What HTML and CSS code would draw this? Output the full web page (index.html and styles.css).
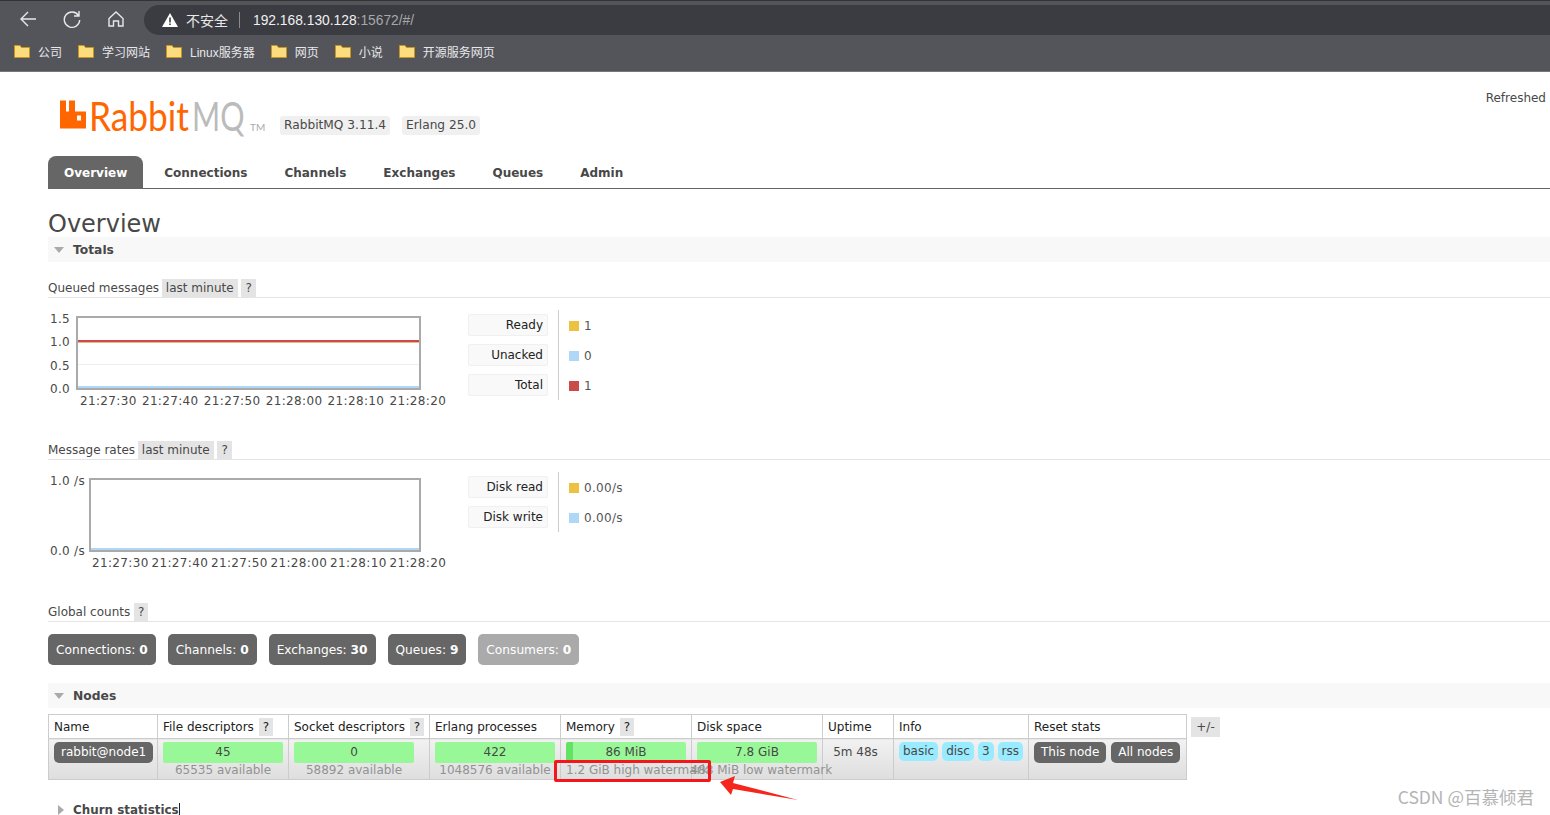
FILE: index.html
```html
<!DOCTYPE html>
<html lang="zh">
<head>
  <meta charset="UTF-8" />
  <title>RabbitMQ Management</title>
  <link rel="stylesheet" href="styles.css">
</head>
<body>

  <div class="chrome">
    <div class="toolbar">
      <svg class="tool-icon" viewBox="0 0 20 20"><path d="M18 10H3M10 3l-7 7 7 7" /></svg>
      <svg class="tool-icon" viewBox="0 0 20 20"><path d="M16.5 6.5A7.7 7.7 0 1 0 17.7 11M17 2v5h-5" /></svg>
      <svg class="tool-icon" viewBox="0 0 20 20"><path d="M3 9.5L10 3l7 6.500V17h-4.500v-5h-5v5H3z" /></svg>
      <div class="address">
        <svg class="warn" viewBox="0 0 16 16"><path d="M8 1l8 14H0z" fill="#fff" /><path d="M7.200 5.500h1.600v5H7.200zM7.200 11.500h1.600v1.600H7.200z" fill="#3b3c41" /></svg>
        <span class="insecure">不安全</span>
        <span class="addr-sep"></span>
        <span class="url">192.168.130.128<span class="url-dim">:15672/#/</span></span>
      </div>
    </div>
    <div class="bookmarks">
      <span class="bookmark"><svg class="folder" viewBox="0 0 16 14"><path d="M.5 1.500h5.500l1.500 2h8v10H.5z" /></svg>公司</span>
      <span class="bookmark"><svg class="folder" viewBox="0 0 16 14"><path d="M.5 1.500h5.500l1.500 2h8v10H.5z" /></svg>学习网站</span>
      <span class="bookmark"><svg class="folder" viewBox="0 0 16 14"><path d="M.5 1.500h5.500l1.500 2h8v10H.5z" /></svg>Linux服务器</span>
      <span class="bookmark"><svg class="folder" viewBox="0 0 16 14"><path d="M.5 1.500h5.500l1.500 2h8v10H.5z" /></svg>网页</span>
      <span class="bookmark"><svg class="folder" viewBox="0 0 16 14"><path d="M.5 1.500h5.500l1.500 2h8v10H.5z" /></svg>小说</span>
      <span class="bookmark"><svg class="folder" viewBox="0 0 16 14"><path d="M.5 1.500h5.500l1.500 2h8v10H.5z" /></svg>开源服务网页</span>
    </div>
  </div>

  <div class="page">
    <div class="header">
      <div class="logo">
        <svg class="logo-mark" viewBox="0 0 26 28"><path fill-rule="evenodd" d="M0 0h6v11h3V0h6v11h11v17H0zM17 15v5h4v-5z" /></svg>
        <span class="logo-rabbit">Rabbit</span><span class="logo-mq">MQ</span><span class="logo-tm">TM</span>
      </div>
      <span class="version">RabbitMQ 3.11.4</span>
      <span class="version">Erlang 25.0</span>
      <span class="refreshed">Refreshed</span>
    </div>

    <div class="tabs">
      <a class="tab active">Overview</a>
      <a class="tab">Connections</a>
      <a class="tab">Channels</a>
      <a class="tab">Exchanges</a>
      <a class="tab">Queues</a>
      <a class="tab">Admin</a>
    </div>

    <h1>Overview</h1>

    <div class="section-bar"><span class="arrow-down"></span>Totals</div>

    <div class="sub-head queued-head">Queued messages <span class="tag">last minute</span> <span class="tag help">?</span></div>
    <div class="chart-row">
      <div class="chart">
        <div class="plot-row">
          <div class="y-axis short"><span>1.5</span><span>1.0</span><span>0.5</span><span>0.0</span></div>
          <svg class="plot" width="345" height="74" viewBox="0 0 345 74">
            <rect x="1" y="1" width="343" height="72" fill="#fff" stroke="#aaa" stroke-width="2" />
            <path d="M2 48.500h341" stroke="#eee" />
            <path d="M2 26h341" stroke="#e8b98a" stroke-width="2" />
            <path d="M2 25h341" stroke="#cb4b4b" stroke-width="2" />
            <path d="M2 71h341" stroke="#afd8f8" stroke-width="2" />
          </svg>
        </div>
        <div class="x-axis wide"><span>21:27:30</span><span>21:27:40</span><span>21:27:50</span><span>21:28:00</span><span>21:28:10</span><span>21:28:20</span></div>
      </div>
      <div class="legend">
        <div class="legend-labels">
          <span class="legend-label">Ready</span>
          <span class="legend-label">Unacked</span>
          <span class="legend-label">Total</span>
        </div>
        <div class="legend-values">
          <span class="legend-value"><i class="swatch yellow"></i>1</span>
          <span class="legend-value"><i class="swatch blue"></i>0</span>
          <span class="legend-value"><i class="swatch red"></i>1</span>
        </div>
      </div>
    </div>

    <div class="sub-head rates-head">Message rates <span class="tag">last minute</span> <span class="tag help">?</span></div>
    <div class="chart-row">
      <div class="chart">
        <div class="plot-row">
          <div class="y-axis long"><span>1.0 /s</span><span>0.0 /s</span></div>
          <svg class="plot" width="332" height="74" viewBox="0 0 332 74">
            <rect x="1" y="1" width="330" height="72" fill="#fff" stroke="#aaa" stroke-width="2" />
            <path d="M2 71h328" stroke="#afd8f8" stroke-width="2" />
          </svg>
        </div>
        <div class="x-axis narrow"><span>21:27:30</span><span>21:27:40</span><span>21:27:50</span><span>21:28:00</span><span>21:28:10</span><span>21:28:20</span></div>
      </div>
      <div class="legend">
        <div class="legend-labels">
          <span class="legend-label">Disk read</span>
          <span class="legend-label">Disk write</span>
        </div>
        <div class="legend-values">
          <span class="legend-value"><i class="swatch yellow"></i>0.00/s</span>
          <span class="legend-value"><i class="swatch blue"></i>0.00/s</span>
        </div>
      </div>
    </div>

    <div class="sub-head counts-head">Global counts <span class="tag help">?</span></div>
    <div class="counts">
      <span class="count">Connections: <b>0</b></span>
      <span class="count">Channels: <b>0</b></span>
      <span class="count">Exchanges: <b>30</b></span>
      <span class="count">Queues: <b>9</b></span>
      <span class="count muted">Consumers: <b>0</b></span>
    </div>

    <div class="section-bar nodes-bar"><span class="arrow-down"></span>Nodes</div>

    <div class="nodes-wrap">
      <table class="nodes">
        <colgroup>
          <col class="c-name"><col class="c-stat"><col class="c-sock"><col class="c-stat"><col class="c-stat"><col class="c-stat"><col class="c-up"><col class="c-info"><col class="c-reset">
        </colgroup>
        <thead>
          <tr>
            <th>Name</th>
            <th>File descriptors <span class="tag help">?</span></th>
            <th>Socket descriptors <span class="tag help">?</span></th>
            <th>Erlang processes</th>
            <th>Memory <span class="tag help">?</span></th>
            <th>Disk space</th>
            <th>Uptime</th>
            <th>Info</th>
            <th>Reset stats</th>
          </tr>
        </thead>
        <tbody>
          <tr>
            <td><span class="pill-dark">rabbit@node1</span></td>
            <td><div class="meter">45</div><div class="sub">65535 available</div></td>
            <td><div class="meter">0</div><div class="sub">58892 available</div></td>
            <td><div class="meter">422</div><div class="sub">1048576 available</div></td>
            <td><div class="meter used">86 MiB</div><div class="sub watermark"><span>1.2 GiB high watermark</span><span class="low">488 MiB low watermark</span></div></td>
            <td><div class="meter">7.8 GiB</div></td>
            <td class="uptime">5m 48s</td>
            <td><div class="pills"><span class="pill">basic</span><span class="pill">disc</span><span class="pill">3</span><span class="pill">rss</span></div></td>
            <td><div class="pills"><span class="pill-dark">This node</span><span class="pill-dark">All nodes</span></div></td>
          </tr>
        </tbody>
      </table>
      <span class="tag plus-minus">+/-</span>
    </div>

    <div class="section-bar churn-bar"><span class="arrow-right"></span>Churn statistics<span class="caret"></span></div>
  </div>

  <!-- annotations on top of the screenshot -->
  <div class="red-box"></div>
  <svg class="red-arrow" width="80" height="26" viewBox="0 0 80 26"><path d="M1 7L16 1l-2 7 65 17-65-11-2 6z" fill="#f5261b" /></svg>
  <div class="csdn">CSDN @百慕倾君</div>

</body>
</html>
```

FILE: styles.css
```css
html, body {
  margin: 0;
  height: 815px;
  overflow: hidden;
}

body {
  position: relative;
  font-family: "DejaVu Sans", Verdana, sans-serif;
  font-size: 12px;
  color: #484848;
  background: #fff;
}

/* browser bar */
.chrome {
  height: 72px;
  background: #54555b;
  border-bottom: 1px solid #77787c;
  border-top: 1px solid #333;
  box-sizing: border-box;
  font-family: "Liberation Sans", "Noto Sans CJK SC", sans-serif;
  color: #fff;
}

.toolbar {
  height: 36px;
  display: flex;
  align-items: center;
  padding-left: 18px;
}

.tool-icon {
  width: 20px;
  height: 20px;
  margin-right: 24px;
  fill: none;
  stroke: #e8e8ea;
  stroke-width: 1.4;
}

.address {
  flex: 1;
  height: 30px;
  margin: 2px 0 0 -6px;
  display: flex;
  align-items: center;
  background: #3b3c41;
  border-radius: 15px 0 0 15px;
  padding-left: 18px;
  font-size: 14px;
}

.warn {
  width: 16px;
  height: 16px;
  margin-right: 8px;
}

.insecure {
  color: #e8e8ea;
}

.addr-sep {
  width: 1px;
  height: 16px;
  background: #8a8b90;
  margin: 0 13px 0 11px;
}

.url {
  font-size: 13.800px;
  color: #f0f0f2;
}

.url-dim {
  color: #a6a7ab;
}

.bookmarks {
  height: 28px;
  display: flex;
  align-items: center;
  padding-left: 14px;
  gap: 16px;
  font-size: 12px;
  color: #e8e8ea;
}

.bookmark {
  display: flex;
  align-items: center;
}

.folder {
  width: 16px;
  height: 14px;
  margin-right: 8px;
  fill: #fbdc7f;
  stroke: #c8961e;
}

/* page */
.page {
  padding-left: 48px;
}

.header {
  height: 84px;
  display: flex;
  align-items: flex-start;
}

.logo {
  display: flex;
  align-items: baseline;
  margin: 24px 0 0 12px;
  width: 220px;
  height: 40px;
  font-family: Lato, "Open Sans", sans-serif;
  font-weight: 400;
  font-size: 41px;
  line-height: 40px;
}

.logo-mark {
  width: 26px;
  height: 29px;
  fill: #ff6600;
  align-self: flex-start;
  margin: 4px 3px 0 0;
}

.logo-rabbit {
  display: inline-block;
  width: 103px;
  color: #ff6600;
  transform: scaleX(.86);
  transform-origin: left;
}

.logo-mq {
  display: inline-block;
  width: 53px;
  color: #bbb;
  transform: scaleX(.74);
  transform-origin: left;
}

.logo-tm {
  color: #aaa;
  font-size: 10px;
  margin-left: 5px;
}

.version {
  margin: 44px 12px 0 0;
  padding: 0 4px;
  height: 19px;
  line-height: 19px;
  background: #f0f0f0;
  border-radius: 3px;
  font-size: 12.200px;
}

.refreshed {
  margin-left: auto;
  margin-top: 19px;
  padding-right: 4px;
}

.tabs {
  display: flex;
  height: 32px;
  border-bottom: 1px solid #666;
}

.tab {
  padding: 0 16px;
  margin-right: 5px;
  line-height: 34px;
  font-weight: bold;
  font-size: 12px;
  color: #484848;
  border-radius: 8px 8px 0 0;
}

.tab.active {
  background: #666;
  color: #fff;
  margin-right: 5px;
}

h1 {
  margin: 20px 0 0;
  height: 28px;
  line-height: 30px;
  font-size: 24px;
  font-weight: normal;
  color: #484848;
}

.section-bar {
  height: 25px;
  box-sizing: border-box;
  padding-top: 1px;
  background: #f8f8f8;
  font-size: 12.300px;
  font-weight: bold;
  display: flex;
  align-items: center;
}

.arrow-down {
  width: 0;
  height: 0;
  margin: 0 9px 0 6px;
  border-left: 5.500px solid transparent;
  border-right: 5.500px solid transparent;
  border-top: 6px solid #aaa;
}

.arrow-right {
  width: 0;
  height: 0;
  margin: 0 9px 0 10px;
  border-top: 5.500px solid transparent;
  border-bottom: 5.500px solid transparent;
  border-left: 6px solid #aaa;
}

.sub-head {
  height: 19px;
  line-height: 20px;
  border-bottom: 1px solid #e4e4e4;
}

.queued-head {
  margin-top: 16px;
}

.tag {
  display: inline-block;
  background: #e4e4e4;
  padding: 0 4px;
  margin-left: -1px;
  line-height: 19px;
  height: 19px;
}

.help {
  margin-left: 0;
}

.chart-row {
  display: flex;
  height: 142px;
}

.chart {
  width: 400px;
  margin-left: 2px;
  padding-top: 14px;
  margin-right: 18px;
  flex: none;
}

.plot-row {
  display: flex;
  height: 84px;
}

.plot {
  display: block;
  margin-top: 4px;
}

.y-axis {
  display: flex;
  flex-direction: column;
  justify-content: space-between;
  line-height: 14px;
  letter-spacing: .3px;
  white-space: nowrap;
}

.y-axis.short {
  width: 26px;
}

.y-axis.long {
  width: 39px;
}

.x-axis {
  display: flex;
  line-height: 14px;
  white-space: nowrap;
  margin-top: -2px;
  letter-spacing: .35px;
}

.x-axis.wide {
  margin-left: 30px;
  gap: 5.200px;
}

.x-axis.narrow {
  margin-left: 42px;
  gap: 2.800px;
}

.legend {
  display: flex;
  padding-top: 12px;
  align-items: flex-start;
}

.legend-labels {
  width: 80px;
  margin-right: 10px;
  padding-top: 4px;
  display: flex;
  flex-direction: column;
  gap: 8px;
}

.legend-label {
  height: 20px;
  line-height: 20px;
  border: 1px solid #f0f0f0;
  border-radius: 2px;
  background: #f9f9f9;
  text-align: right;
  padding-right: 4px;
  color: #222;
}

.legend-values {
  border-left: 1px solid #ccc;
  padding: 5px 0 3px 10px;
  display: flex;
  flex-direction: column;
  gap: 8px;
}

.legend-value {
  height: 22px;
  line-height: 22px;
  display: flex;
  align-items: center;
  color: #555;
  letter-spacing: .3px;
}

.swatch {
  width: 10px;
  height: 10px;
  margin-right: 5px;
}

.yellow { background: #edc240; }
.blue { background: #afd8f8; }
.red { background: #cb4b4b; }

.counts {
  display: flex;
  gap: 12px;
  margin-top: 12px;
}

.count {
  height: 31px;
  line-height: 32px;
  padding: 0 8px;
  background: #666;
  color: #fff;
  border-radius: 5px;
  font-size: 12.200px;
}

.count.muted {
  background: #aaa;
}

.nodes-bar {
  margin-top: 18px;
}

.nodes-wrap {
  display: flex;
  align-items: flex-start;
  margin-top: 6px;
}

.nodes {
  table-layout: fixed;
  width: 1138px;
  border-collapse: collapse;
  border: 1px solid #ccc;
}

.c-name { width: 109px; }
.c-stat { width: 131px; }
.c-sock { width: 141px; }
.c-up { width: 71px; }
.c-info { width: 135px; }
.c-reset { width: 158px; }

.nodes th {
  height: 23px;
  padding: 0 5px;
  font-weight: normal;
  text-align: left;
  white-space: nowrap;
  border: 1px solid #ccc;
  color: #222;
  background: #fff;
}

.nodes .help {
  height: 18px;
  line-height: 18px;
  margin-left: 1px;
}

.nodes td {
  height: 41px;
  padding: 3px 5px 0;
  box-sizing: border-box;
  vertical-align: top;
  border: 1px solid #ccc;
  background: linear-gradient(#f2f2f2, #dedede);
}

.meter {
  width: 120px;
  height: 21px;
  line-height: 21px;
  background: #98f898;
  border-radius: 2px;
  color: #484848;
  text-align: center;
}

.meter.used {
  box-sizing: border-box;
  border-left: 7px solid #64e264;
  padding-right: 7px;
}

.sub {
  width: 120px;
  display: flex;
  justify-content: center;
  line-height: 15px;
  color: #929292;
  white-space: nowrap;
}

.watermark {
  justify-content: flex-start;
}

.low {
  margin-left: -18px;
  flex: none;
}

.uptime {
  text-align: center;
  line-height: 20px;
}

.nodes .uptime {
  padding-right: 10px;
}

.pills {
  display: flex;
  gap: 4px;
}

.pill {
  height: 19px;
  line-height: 19px;
  padding: 0 4px;
  background: #99ebff;
  border-radius: 5px;
}

.pill-dark {
  display: inline-block;
  height: 21px;
  line-height: 21px;
  padding: 0 7px;
  background: #666;
  color: #fff;
  border-radius: 5px;
  white-space: nowrap;
}

.pill-dark + .pill-dark {
  margin-left: 1px;
}

.plus-minus {
  margin: 3px 0 0 4px;
  width: 21px;
  text-align: center;
  height: 20px;
  line-height: 20px;
}

.churn-bar {
  background: none;
  margin-top: 17px;
  font-size: 11.900px;
}

.caret {
  width: 1px;
  height: 15px;
  background: #222;
}

/* annotations */
.red-box {
  position: absolute;
  left: 554px;
  top: 760px;
  width: 151px;
  height: 16px;
  border: 3px solid #f5161b;
  border-radius: 2px;
}

.red-arrow {
  position: absolute;
  left: 719px;
  top: 775px;
}

.csdn {
  position: absolute;
  right: 16px;
  top: 784px;
  font-family: "Noto Sans CJK SC", "Liberation Sans", sans-serif;
  font-size: 17.500px;
  color: #b4b4b4;
}
```
